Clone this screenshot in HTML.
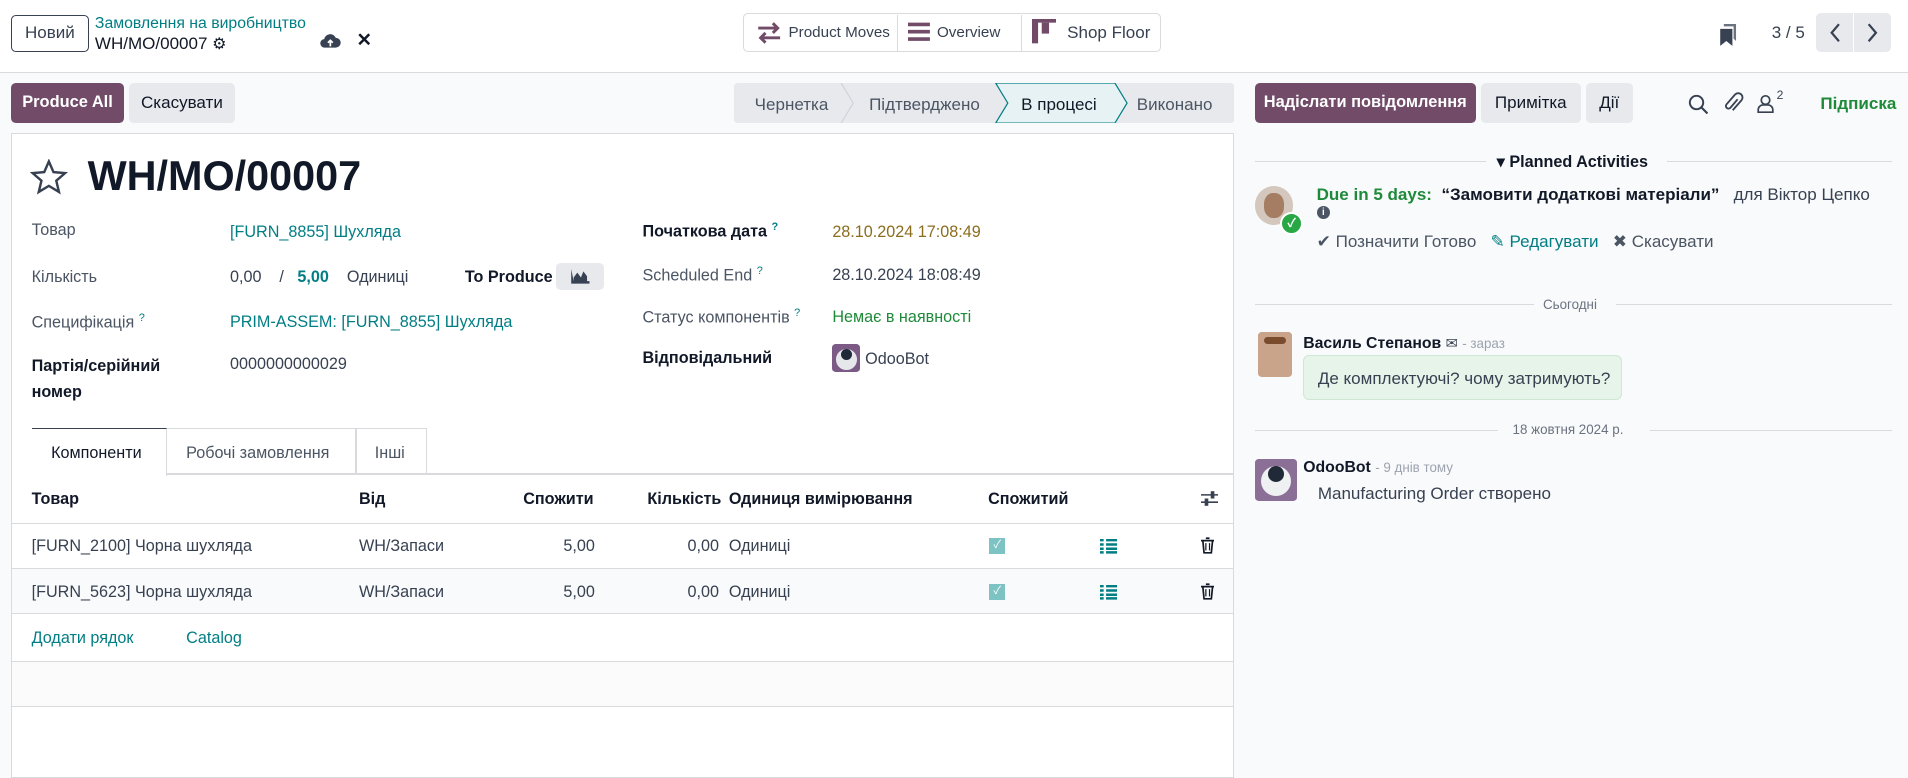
<!DOCTYPE html>
<html><head><meta charset="utf-8">
<style>
html{zoom:1.21684}
*{box-sizing:border-box;margin:0;padding:0}
body{width:1568px;height:627px;overflow:hidden;background:#f9fafb;font-family:"Liberation Sans","Noto Sans CJK SC",sans-serif;font-size:13.3px;color:#374151;position:relative}
.a{position:absolute;white-space:nowrap}
.btn{position:absolute;display:flex;align-items:center;justify-content:center;border-radius:4px;font-size:14px}
.teal{color:#017e84}
.lbl{color:#4b5563}
.b{font-weight:bold;color:#111827}
.sup{font-size:9px;vertical-align:super;color:#017e84}
.hr{position:absolute;height:1px;background:#d8dadd}
</style></head><body>
<div class="a" style="left:0;top:0;width:1568px;height:60px;background:#fff;border-bottom:1px solid #d8dadd"></div>
<div class="btn" style="left:9px;top:12px;width:64px;height:31px;border:1px solid #374151;background:#fff;color:#374151">Новий</div>
<div class="a teal" style="left:78px;top:12px;font-size:13px">Замовлення на виробництво</div>
<div class="a" style="left:78px;top:28px;font-size:14px;color:#111827">WH/MO/00007 <span style="font-size:13px">⚙</span></div>
<svg class="a" style="left:263px;top:27px" width="17" height="13"><path d="M4 12a3.5 3.5 0 0 1-.5-7A5 5 0 0 1 13 4a4 4 0 0 1 0 8z" fill="#374151"/><path d="M8.5 11V6M6.5 8l2-2 2 2" stroke="#fff" stroke-width="1.4" fill="none"/></svg>
<div class="a" style="left:293px;top:24px;font-size:15px;font-weight:bold;color:#111827">✕</div>
<div class="a" style="left:611px;top:11px;width:343px;height:32px;border:1px solid #d8dadd;border-radius:4px;background:#fff"></div>
<div class="a" style="left:737px;top:12px;width:1px;height:30px;background:#d8dadd"></div>
<div class="a" style="left:839px;top:12px;width:1px;height:30px;background:#d8dadd"></div>
<svg class="a" style="left:622px;top:18px" width="20" height="18"><path d="M1 5h16M13 1l4 4-4 4M19 13H3M7 9l-4 4 4 4" stroke="#714b67" stroke-width="2.4" fill="none"/></svg>
<div class="a" style="left:648px;top:20px;font-size:12.5px">Product Moves</div>
<svg class="a" style="left:746px;top:18px" width="18" height="16"><path d="M0 2h18M0 8h18M0 14h18" stroke="#714b67" stroke-width="3"/></svg>
<div class="a" style="left:770px;top:20px;font-size:12.5px">Overview</div>
<svg class="a" style="left:848px;top:16px" width="20" height="20"><rect x="0" y="0" width="20" height="3" fill="#714b67"/><rect x="0" y="0" width="5" height="20" fill="#714b67"/><rect x="8" y="3" width="6" height="9" fill="#714b67"/></svg>
<div class="a" style="left:877px;top:19px;font-size:14px">Shop Floor</div>
<svg class="a" style="left:1413px;top:20px" width="16" height="19"><path d="M4 0h10v14l-2-2V2H4z" fill="#6b7280"/><path d="M1 4h10v14l-5-4-5 4z" fill="#374151"/></svg>
<div class="a" style="left:1456px;top:19px;font-size:14px">3 / 5</div>
<div class="btn" style="left:1492px;top:11px;width:62px;height:32px;background:#e7e9ed"></div>
<div class="a" style="left:1523px;top:11px;width:1px;height:32px;background:#fff"></div>
<svg class="a" style="left:1502px;top:19px" width="12" height="16"><path d="M9 1L3 8l6 7" stroke="#374151" stroke-width="1.8" fill="none"/></svg>
<svg class="a" style="left:1533px;top:19px" width="12" height="16"><path d="M3 1l6 7-6 7" stroke="#374151" stroke-width="1.8" fill="none"/></svg>
<div class="btn" style="left:9px;top:68px;width:93px;height:33px;background:#714b67;color:#fff;font-weight:bold;font-size:13.5px">Produce All</div>
<div class="btn" style="left:106px;top:68px;width:87px;height:33px;background:#e7e9ed;color:#111827">Скасувати</div>
<svg class="a" style="left:603px;top:68px" width="411" height="33">
<rect x="0" y="0" width="411" height="33" rx="3" fill="#e7e9ed"/>
<path d="M88 0l10 16.5L88 33" stroke="#d0d4da" fill="none"/>
<path d="M215 0h98l10 16.5L313 33h-98l10-16.5z" fill="#e6f2f3" stroke="#017e84"/>
<text x="17" y="22" font-family="Liberation Sans" font-size="14" fill="#4b5563">Чернетка</text>
<text x="111" y="22" font-family="Liberation Sans" font-size="14" fill="#4b5563">Підтверджено</text>
<text x="236" y="22" font-family="Liberation Sans" font-size="14" fill="#111827">В процесі</text>
<text x="331" y="22" font-family="Liberation Sans" font-size="14" fill="#4b5563">Виконано</text>
</svg>
<div class="btn" style="left:1031px;top:68px;width:182px;height:33px;background:#714b67;color:#fff;font-weight:bold;font-size:13.5px">Надіслати повідомлення</div>
<div class="btn" style="left:1217px;top:68px;width:82px;height:33px;background:#e7e9ed;color:#111827">Примітка</div>
<div class="btn" style="left:1303px;top:68px;width:39px;height:33px;background:#e7e9ed;color:#111827">Дії</div>
<svg class="a" style="left:1387px;top:77px" width="17" height="17"><circle cx="7" cy="7" r="5.5" stroke="#374151" stroke-width="1.6" fill="none"/><path d="M11 11l5 5" stroke="#374151" stroke-width="1.8"/></svg>
<svg class="a" style="left:1416px;top:76px" width="17" height="18"><path d="M12 6l-6 7a2 2 0 0 1-3-3l7-8a3.5 3.5 0 0 1 5 5l-7 8" stroke="#374151" stroke-width="1.5" fill="none"/></svg>
<svg class="a" style="left:1444px;top:77px" width="14" height="16"><circle cx="7" cy="5" r="3.5" stroke="#374151" stroke-width="1.4" fill="none"/><path d="M1 15v-2a4 4 0 0 1 4-4h4a4 4 0 0 1 4 4v2z" stroke="#374151" stroke-width="1.4" fill="none"/></svg>
<div class="a" style="left:1460px;top:72px;font-size:10px">2</div>
<div class="a" style="left:1496px;top:77px;font-size:14px;font-weight:bold;color:#1e8a3a">Підписка</div>
<div class="a" style="left:9px;top:109px;width:1005px;height:530px;background:#fff;border:1px solid #d8dadd"></div>
<svg class="a" style="left:25px;top:131px" width="31" height="30"><path d="M15.5 2l3.8 8.8 9.5.8-7.2 6.2 2.2 9.3-8.3-5-8.3 5 2.2-9.3L2.2 11.6l9.5-.8z" stroke="#374151" stroke-width="2" fill="none"/></svg>
<div class="a" style="left:72px;top:126px;font-size:34px;font-weight:bold;color:#111827">WH/MO/00007</div>
<div class="a lbl" style="left:26px;top:182px">Товар</div>
<div class="a teal" style="left:189px;top:183px">[FURN_8855] Шухляда</div>
<div class="a lbl" style="left:26px;top:220px">Кількість</div>
<div class="a" style="left:189px;top:220px">0,00 &nbsp;&nbsp; / &nbsp;&nbsp;<b class="teal">5,00</b> &nbsp;&nbsp;&nbsp;Одиниці</div>
<div class="a b" style="left:382px;top:220px">To Produce</div>
<div class="btn" style="left:457px;top:216px;width:39px;height:22px;background:#e7e9ed"><svg width="16" height="12"><path d="M1 0v12h15v-2H3z" fill="#374151"/><path d="M3 11V7l3-4 3 4 2-5 3 4v5z" fill="#374151"/></svg></div>
<div class="a lbl" style="left:26px;top:256px">Специфікація <span class="sup">?</span></div>
<div class="a teal" style="left:189px;top:257px">PRIM-ASSEM: [FURN_8855] Шухляда</div>
<div class="a b" style="left:26px;top:291px;line-height:21px">Партія/серійний<br>номер</div>
<div class="a" style="left:189px;top:292px">0000000000029</div>
<div class="a b" style="left:528px;top:182px">Початкова дата <span class="sup">?</span></div>
<div class="a" style="left:684px;top:183px;color:#8a6d1e">28.10.2024 17:08:49</div>
<div class="a lbl" style="left:528px;top:218px">Scheduled End <span class="sup">?</span></div>
<div class="a" style="left:684px;top:219px">28.10.2024 18:08:49</div>
<div class="a lbl" style="left:528px;top:252px">Статус компонентів <span class="sup">?</span></div>
<div class="a" style="left:684px;top:253px;color:#1e8a3a">Немає в наявності</div>
<div class="a b" style="left:528px;top:287px">Відповідальний</div>
<div class="a" style="left:684px;top:283px;width:23px;height:23px;background:#7b5a86;border-radius:3px"><div style="margin:3px;width:17px;height:17px;border-radius:50%;background:#e5e7eb"><div style="margin:4px;width:9px;height:9px;border-radius:50%;background:#1f2937"></div></div></div>
<div class="a" style="left:711px;top:288px">OdooBot</div>
<div class="a" style="left:26px;top:352px;width:325px;height:38px;border:1px solid #d8dadd;border-bottom:none"></div>
<div class="a" style="left:26px;top:352px;width:111px;height:39px;background:#fff;border-top:1px solid #374151;border-right:1px solid #d8dadd"></div>
<div class="a" style="left:292px;top:352px;width:1px;height:38px;background:#d8dadd"></div>
<div class="a" style="left:42px;top:365px;color:#111827">Компоненти</div>
<div class="a lbl" style="left:153px;top:365px">Робочі замовлення</div>
<div class="a lbl" style="left:308px;top:365px">Інші</div>
<div class="hr" style="left:137px;top:389px;width:876px"></div>
<div class="a b" style="left:26px;top:403px">Товар</div>
<div class="a b" style="left:295px;top:403px">Від</div>
<div class="a b" style="left:430px;top:403px">Спожити</div>
<div class="a b" style="left:532px;top:403px">Кількість</div>
<div class="a b" style="left:599px;top:403px">Одиниця вимірювання</div>
<div class="a b" style="left:812px;top:403px">Спожитий</div>
<svg class="a" style="left:987px;top:403px" width="14" height="14"><path d="M0 4h14M0 10h14" stroke="#374151" stroke-width="1.3"/><rect x="8" y="1" width="3" height="6" fill="#374151"/><rect x="3" y="7" width="3" height="6" fill="#374151"/></svg>
<div class="hr" style="left:10px;top:430px;width:1003px"></div>
<div class="a" style="left:10px;top:467px;width:1003px;height:38px;background:#f9fafb;border-top:1px solid #d8dadd;border-bottom:1px solid #d8dadd"></div>
<div class="a" style="left:26px;top:441px">[FURN_2100] Чорна шухляда</div>
<div class="a" style="left:295px;top:441px">WH/Запаси</div>
<div class="a" style="left:463px;top:441px">5,00</div>
<div class="a" style="left:565px;top:441px">0,00</div>
<div class="a" style="left:599px;top:441px">Одиниці</div>
<div class="a" style="left:26px;top:479px">[FURN_5623] Чорна шухляда</div>
<div class="a" style="left:295px;top:479px">WH/Запаси</div>
<div class="a" style="left:463px;top:479px">5,00</div>
<div class="a" style="left:565px;top:479px">0,00</div>
<div class="a" style="left:599px;top:479px">Одиниці</div>
<div class="a" style="left:813px;top:442px;width:13px;height:13px;background:#7ec3c4;color:#fff;font-size:9px;text-align:center;line-height:13px">✓</div>
<div class="a" style="left:813px;top:480px;width:13px;height:13px;background:#7ec3c4;color:#fff;font-size:9px;text-align:center;line-height:13px">✓</div>
<svg class="a" style="left:904px;top:443px" width="14" height="12"><path d="M0 1h3M5 1h9M0 4.5h3M5 4.5h9M0 8h3M5 8h9M0 11h3M5 11h9" stroke="#017e84" stroke-width="2"/></svg>
<svg class="a" style="left:904px;top:481px" width="14" height="12"><path d="M0 1h3M5 1h9M0 4.5h3M5 4.5h9M0 8h3M5 8h9M0 11h3M5 11h9" stroke="#017e84" stroke-width="2"/></svg>
<svg class="a" style="left:987px;top:441px" width="11" height="14"><path d="M0 3h11M4 1h3M1.5 3l1 10h6l1-10" stroke="#111827" stroke-width="1.4" fill="none"/><path d="M4 5v6M7 5v6" stroke="#111827"/></svg>
<svg class="a" style="left:987px;top:479px" width="11" height="14"><path d="M0 3h11M4 1h3M1.5 3l1 10h6l1-10" stroke="#111827" stroke-width="1.4" fill="none"/><path d="M4 5v6M7 5v6" stroke="#111827"/></svg>
<div class="a teal" style="left:26px;top:517px">Додати рядок</div>
<div class="a teal" style="left:153px;top:517px">Catalog</div>
<div class="a" style="left:10px;top:543px;width:1003px;height:38px;background:#fbfbfb;border-top:1px solid #d8dadd;border-bottom:1px solid #d8dadd"></div>
<div class="hr" style="left:1031px;top:132px;width:190px"></div>
<div class="hr" style="left:1370px;top:132px;width:185px"></div>
<div class="a b" style="left:1230px;top:125px">▾ Planned Activities</div>
<div class="a" style="left:1031px;top:153px;width:32px;height:32px;border-radius:50%;background:#d4c7bd;overflow:hidden"><div style="margin:6px 8px;width:16px;height:20px;border-radius:45%;background:#a57d63"></div></div>
<div class="a" style="left:1052px;top:174px;width:19px;height:19px;border-radius:50%;background:#28a745;border:2px solid #fff;color:#fff;font-size:10px;text-align:center;line-height:15px;font-weight:bold">✓</div>
<div class="a" style="left:1082px;top:152px;font-size:14px"><b style="color:#1e8a3a">Due in 5 days:</b> &nbsp;<b style="color:#111827">“Замовити додаткові матеріали”</b> &nbsp; для Віктор Цепко</div>
<div class="a" style="left:1082px;top:169px;width:11px;height:11px;border-radius:50%;background:#4b5563;color:#fff;font-size:8px;text-align:center;line-height:11px;font-weight:bold">i</div>
<div class="a" style="left:1082px;top:191px;font-size:14px"><span style="color:#4b5563">✔ Позначити Готово</span> &nbsp;&nbsp;<span class="teal">✎ Редагувати</span> &nbsp;&nbsp;<span style="color:#4b5563">✖ Скасувати</span></div>
<div class="hr" style="left:1031px;top:250px;width:230px"></div>
<div class="hr" style="left:1328px;top:250px;width:227px"></div>
<div class="a" style="left:1268px;top:244px;font-size:11px;color:#6b7280">Сьогодні</div>
<div class="a" style="left:1034px;top:273px;width:28px;height:37px;background:#c9a38a;border-radius:3px"><div style="margin:4px 5px;width:18px;height:6px;background:#7b4b2e;border-radius:4px"></div></div>
<div class="a" style="left:1071px;top:275px;font-size:13px"><b style="color:#111827">Василь Степанов</b> <span style="font-size:12px">✉</span> <span style="font-size:11px;color:#9ca3af">- зараз</span></div>
<div class="a" style="left:1071px;top:292px;width:262px;height:37px;background:#e6f4ea;border:1px solid #cfe8d4;border-radius:5px"></div>
<div class="a" style="left:1083px;top:303px;font-size:14px">Де комплектуючі? чому затримують?</div>
<div class="hr" style="left:1031px;top:353px;width:200px"></div>
<div class="hr" style="left:1356px;top:353px;width:199px"></div>
<div class="a" style="left:1243px;top:347px;font-size:11px;color:#6b7280">18 жовтня 2024 р.</div>
<div class="a" style="left:1031px;top:377px;width:35px;height:35px;background:#8c6f97;border-radius:3px"><div style="margin:5px;width:25px;height:25px;border-radius:50%;background:#eef0f2"><div style="margin:6px;width:13px;height:13px;border-radius:50%;background:#1f2937"></div></div></div>
<div class="a" style="left:1071px;top:377px;font-size:13px"><b style="color:#111827">OdooBot</b> <span style="font-size:11px;color:#9ca3af">- 9 днів тому</span></div>
<div class="a" style="left:1083px;top:398px;font-size:14px">Manufacturing Order створено</div>
</body></html>
